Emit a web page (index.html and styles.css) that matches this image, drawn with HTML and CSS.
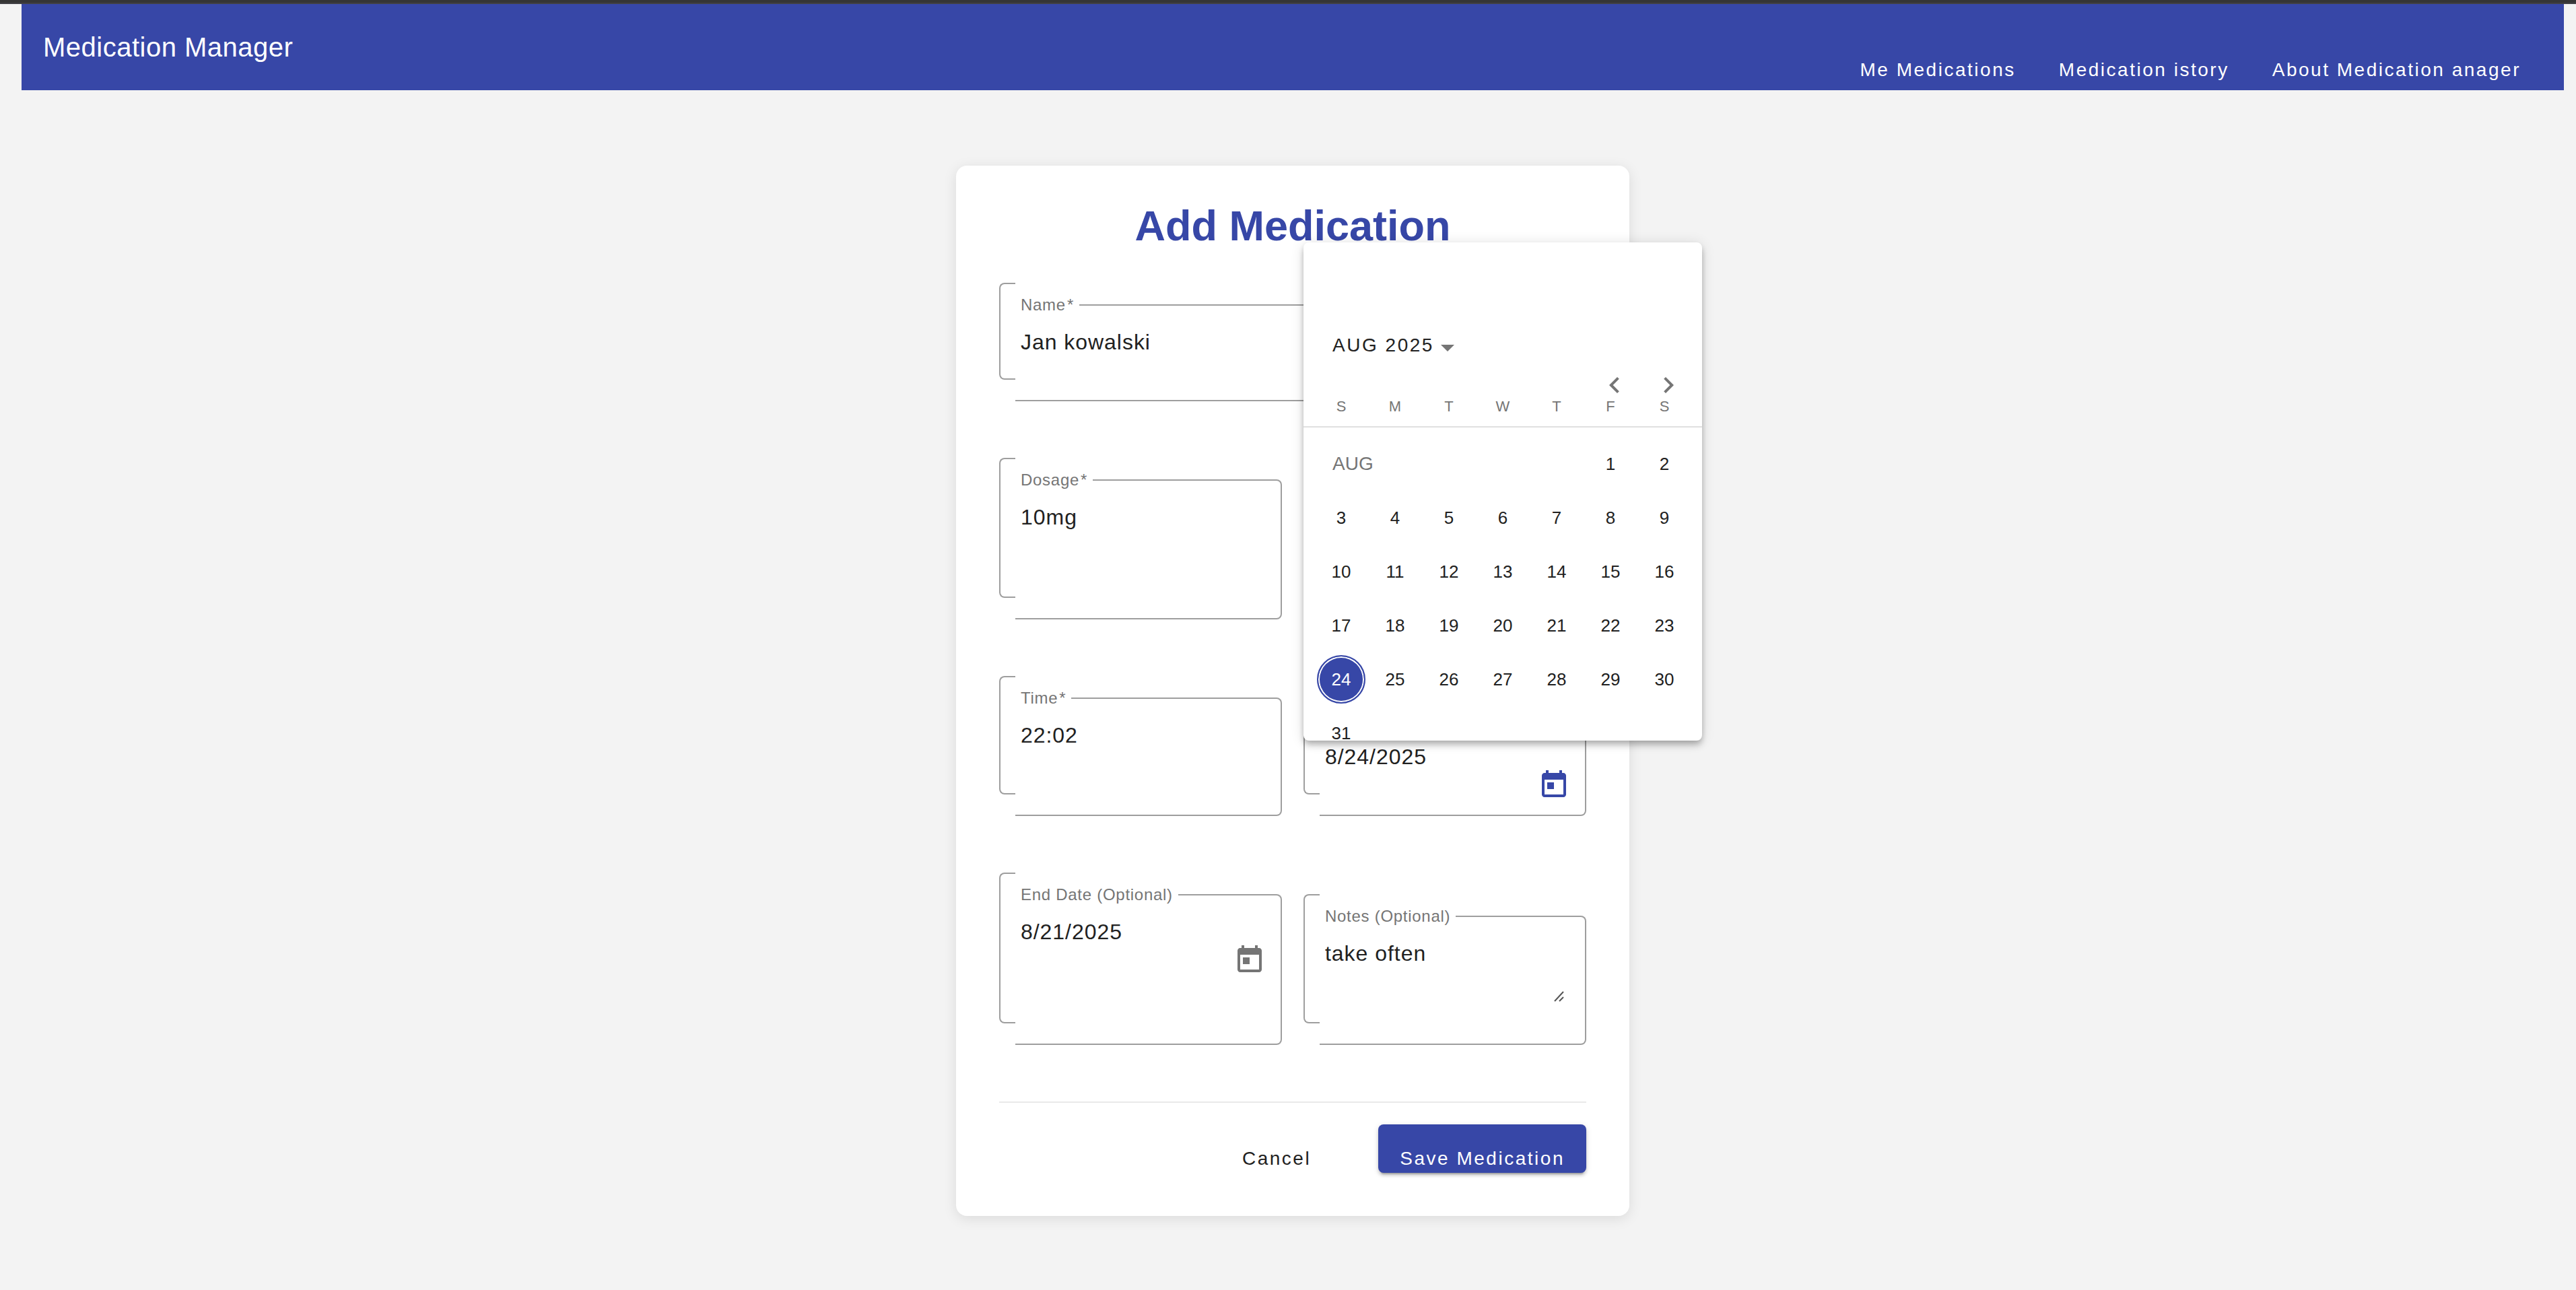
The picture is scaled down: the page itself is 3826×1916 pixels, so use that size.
FILE: index.html
```html
<!DOCTYPE html>
<html lang="en">
<head>
<meta charset="utf-8">
<meta name="viewport" content="width=device-width, initial-scale=1">
<title>Medication Manager</title>
<link rel="stylesheet" href="styles.css">
</head>
<body>
<div class="page">
  <header class="toolbar">
    <span class="toolbar-title">Medication Manager</span>
    <nav class="toolbar-nav">
      <a class="nav-link" href="#medications">Me Medications</a>
      <a class="nav-link" href="#history">Medication istory</a>
      <a class="nav-link" href="#about">About Medication anager</a>
    </nav>
  </header>

  <main class="card">
    <h1 class="card-title">Add Medication</h1>
    <form class="form">
      <div class="field field-wide">
        <div class="outline">
          <span class="outline-start"></span>
          <span class="outline-notch"><label class="field-label" for="name">Name<span class="required">*</span></label></span>
          <span class="outline-end"></span>
        </div>
        <div class="field-body"><input class="field-input" id="name" type="text" value="Jan kowalski"></div>
      </div>

      <div class="field field-tall">
        <div class="outline">
          <span class="outline-start"></span>
          <span class="outline-notch"><label class="field-label" for="dosage">Dosage<span class="required">*</span></label></span>
          <span class="outline-end"></span>
        </div>
        <div class="field-body"><input class="field-input" id="dosage" type="text" value="10mg"></div>
      </div>

      <div class="field field-medium">
        <div class="outline">
          <span class="outline-start"></span>
          <span class="outline-notch"><label class="field-label" for="time">Time<span class="required">*</span></label></span>
          <span class="outline-end"></span>
        </div>
        <div class="field-body"><input class="field-input" id="time" type="text" value="22:02"></div>
      </div>

      <div class="field field-lowered">
        <div class="outline">
          <span class="outline-start"></span>
          <span class="outline-notch"></span>
          <span class="outline-end"></span>
        </div>
        <div class="field-body">
          <input class="field-input" id="start" type="text" aria-label="Start date" value="8/24/2025">
          <button class="date-toggle date-toggle-active" type="button" aria-label="Open calendar">
            <svg class="icon" viewBox="0 0 24 24"><path d="M19 3h-1V1h-2v2H8V1H6v2H5c-1.11 0-1.99.9-1.99 2L3 19c0 1.1.89 2 2 2h14c1.1 0 2-.9 2-2V5c0-1.1-.9-2-2-2zm0 16H5V8h14v11zM7 10h5v5H7z"/></svg>
          </button>
        </div>

        <div class="calendar">
          <div class="calendar-period">
            <button class="period-button" type="button">AUG 2025<svg class="caret" viewBox="0 0 20 10"><path d="M0 0h20L10 10z"/></svg></button>
          </div>
          <div class="calendar-nav">
            <button class="month-button" type="button" aria-label="Previous month"><svg class="icon" viewBox="0 0 24 24"><path d="M15.41 7.41L14 6l-6 6 6 6 1.41-1.41L10.83 12z"/></svg></button>
            <button class="month-button" type="button" aria-label="Next month"><svg class="icon" viewBox="0 0 24 24"><path d="M10 6L8.59 7.41 13.17 12l-4.58 4.59L10 18l6-6z"/></svg></button>
          </div>
          <table class="month">
            <thead>
              <tr><th>S</th><th>M</th><th>T</th><th>W</th><th>T</th><th>F</th><th>S</th></tr>
              <tr><td class="month-divider" colspan="7"></td></tr>
            </thead>
            <tbody>
              <tr><td class="month-name" colspan="5">AUG</td><td><button class="day" type="button">1</button></td><td><button class="day" type="button">2</button></td></tr>
              <tr><td><button class="day" type="button">3</button></td><td><button class="day" type="button">4</button></td><td><button class="day" type="button">5</button></td><td><button class="day" type="button">6</button></td><td><button class="day" type="button">7</button></td><td><button class="day" type="button">8</button></td><td><button class="day" type="button">9</button></td></tr>
              <tr><td><button class="day" type="button">10</button></td><td><button class="day" type="button">11</button></td><td><button class="day" type="button">12</button></td><td><button class="day" type="button">13</button></td><td><button class="day" type="button">14</button></td><td><button class="day" type="button">15</button></td><td><button class="day" type="button">16</button></td></tr>
              <tr><td><button class="day" type="button">17</button></td><td><button class="day" type="button">18</button></td><td><button class="day" type="button">19</button></td><td><button class="day" type="button">20</button></td><td><button class="day" type="button">21</button></td><td><button class="day" type="button">22</button></td><td><button class="day" type="button">23</button></td></tr>
              <tr><td><button class="day day-selected" type="button">24</button></td><td><button class="day" type="button">25</button></td><td><button class="day" type="button">26</button></td><td><button class="day" type="button">27</button></td><td><button class="day" type="button">28</button></td><td><button class="day" type="button">29</button></td><td><button class="day" type="button">30</button></td></tr>
              <tr><td><button class="day" type="button">31</button></td><td colspan="6"></td></tr>
            </tbody>
          </table>
        </div>
      </div>

      <div class="field">
        <div class="outline">
          <span class="outline-start"></span>
          <span class="outline-notch"><label class="field-label" for="end">End Date (Optional)</label></span>
          <span class="outline-end"></span>
        </div>
        <div class="field-body">
          <input class="field-input" id="end" type="text" value="8/21/2025">
          <button class="date-toggle" type="button" aria-label="Open calendar">
            <svg class="icon" viewBox="0 0 24 24"><path d="M19 3h-1V1h-2v2H8V1H6v2H5c-1.11 0-1.99.9-1.99 2L3 19c0 1.1.89 2 2 2h14c1.1 0 2-.9 2-2V5c0-1.1-.9-2-2-2zm0 16H5V8h14v11zM7 10h5v5H7z"/></svg>
          </button>
        </div>
      </div>

      <div class="field field-lowered">
        <div class="outline">
          <span class="outline-start"></span>
          <span class="outline-notch"><label class="field-label" for="notes">Notes (Optional)</label></span>
          <span class="outline-end"></span>
        </div>
        <div class="field-body notes-body">
          <textarea class="field-input field-textarea" id="notes">take often</textarea>
          <svg class="grip" viewBox="0 0 16 16"><path d="M1 15L14 1M8 15l6-6"/></svg>
        </div>
      </div>

      <div class="actions">
        <button class="button" type="button">Cancel</button>
        <button class="button button-primary" type="submit">Save Medication</button>
      </div>
    </form>
  </main>
</div>
</body>
</html>
```
FILE: styles.css
```css
:root {
  --primary: #3747a7;
  --text: #212121;
  --muted: #757575;
  --line: #9e9e9e;
}

* {
  box-sizing: border-box;
}

body {
  margin: 0;
  background: #f3f3f3;
  color: var(--text);
  font-family: "Liberation Sans", Arial, sans-serif;
  border-top: 4px solid #353535;
}

button,
input,
textarea {
  margin: 0;
  padding: 0;
  border: 0;
  background: none;
  color: inherit;
  font-family: inherit;
}

svg {
  display: block;
  fill: currentColor;
}

.page {
  border-top: 2px solid #414044;
  padding: 0 18px 64px 32px;
}

/* Toolbar */
.toolbar {
  display: flex;
  align-items: center;
  justify-content: space-between;
  min-height: 128px;
  padding: 0 32px;
  background: var(--primary);
  color: #fff;
}

.toolbar-title {
  font-size: 40px;
  line-height: 64px;
  letter-spacing: 0.0125em;
}

.toolbar-nav {
  display: flex;
  align-self: flex-end;
  padding-bottom: 10px;
}

.nav-link {
  padding: 0 32px;
  color: inherit;
  font-size: 28px;
  line-height: 40px;
  letter-spacing: 0.09em;
  text-decoration: none;
}

/* Card */
.card {
  max-width: 1000px;
  margin: 112px auto 0;
  padding: 48px 64px 64px;
  border-radius: 16px;
  background: #fff;
  box-shadow: 0 4px 20px rgba(0, 0, 0, 0.1);
}

.card-title {
  margin: 0 0 44px;
  color: var(--primary);
  font-size: 63px;
  line-height: 82px;
  text-align: center;
}

.form {
  display: grid;
  grid-template-columns: repeat(2, minmax(0, 1fr));
  gap: 116px 32px;
}

/* Outlined field: the start cap sits above the notch and end cap */
.field {
  display: grid;
  grid-template-columns: minmax(0, 1fr);
  position: relative;
  min-height: 144px;
}

.field > .outline,
.field > .field-body {
  grid-area: 1 / 1;
}

.field-wide {
  grid-column: 1 / -1;
}

.field-tall {
  grid-column: 1;
  min-height: 208px;
}

.field-medium {
  grid-column: 1;
  min-height: 176px;
}

.field-lowered {
  margin-top: 32px;
}

.outline {
  display: flex;
}

.outline-start {
  width: 24px;
  border: 2px solid var(--line);
  border-right: 0;
  border-radius: 8px 0 0 8px;
}

.outline-notch,
.outline-end {
  margin: 32px 0 -32px;
  border-bottom: 2px solid var(--line);
}

.outline-notch {
  padding: 0 8px;
}

.outline-end {
  flex: 1;
  border-top: 2px solid var(--line);
  border-right: 2px solid var(--line);
  border-radius: 0 8px 8px 0;
}

.field-label {
  display: block;
  margin-top: -12px;
  color: var(--muted);
  font-size: 24px;
  line-height: 26px;
  letter-spacing: 0.03em;
}

.required {
  margin-left: 2px;
}

.field-body {
  display: flex;
  align-items: flex-start;
  padding: 64px 24px 0 32px;
}

.field-input {
  flex: 1;
  width: 100%;
  min-width: 0;
  height: 48px;
  font-size: 32px;
  line-height: 48px;
  letter-spacing: 0.03em;
  outline: 0;
}

.date-toggle {
  height: 80px;
  padding-top: 42px;
  color: var(--muted);
}

.date-toggle-active {
  color: var(--primary);
}

.date-toggle .icon {
  margin-bottom: -10px;
}

.icon {
  width: 48px;
  height: 48px;
}

.notes-body {
  padding-right: 32px;
  padding-bottom: 32px;
}

.field-textarea {
  height: 96px;
  resize: none;
  overflow: hidden;
}

.grip {
  align-self: flex-end;
  width: 16px;
  height: 16px;
  margin-left: -16px;
  fill: none;
  stroke: #555;
  stroke-width: 2;
}

/* Calendar popup */
.calendar {
  position: absolute;
  z-index: 1;
  bottom: 80px;
  left: 0;
  width: 592px;
  height: 740px;
  padding-top: 118px;
  border-radius: 8px;
  background: #fff;
  box-shadow: 0 4px 8px -2px rgba(0, 0, 0, 0.2), 0 8px 10px rgba(0, 0, 0, 0.14), 0 2px 20px rgba(0, 0, 0, 0.12);
}

.calendar-period {
  padding-left: 43px;
}

.period-button {
  display: flex;
  align-items: center;
  gap: 10px;
  font-size: 28px;
  line-height: 70px;
  letter-spacing: 0.09em;
}

.caret {
  width: 20px;
  height: 10px;
  margin-top: 8px;
  fill: var(--muted);
}

.calendar-nav {
  display: flex;
  justify-content: flex-end;
  padding-right: 10px;
  color: var(--muted);
}

.month-button {
  display: flex;
  justify-content: center;
  width: 80px;
}

.month {
  width: 100%;
  padding: 0 16px;
  border-spacing: 0;
  table-layout: fixed;
}

.month th {
  height: 37px;
  padding: 0;
  color: var(--muted);
  font-size: 22px;
  font-weight: 400;
  line-height: 16px;
  vertical-align: top;
}

.month td {
  height: 80px;
  padding: 0;
}

.month .month-divider {
  position: relative;
  height: 16px;
}

.month-divider::after {
  position: absolute;
  top: 0;
  right: -16px;
  left: -16px;
  height: 2px;
  background: #e0e0e0;
  content: "";
}

.month .month-name {
  padding-left: 27px;
  color: var(--muted);
  font-size: 28px;
}

.day {
  display: block;
  width: 72px;
  height: 72px;
  margin: 0 auto;
  border-radius: 50%;
  font-size: 26px;
}

.day-selected {
  border: 2px solid var(--primary);
  background: var(--primary);
  box-shadow: inset 0 0 0 2px #fff;
  color: #fff;
}

/* Form actions */
.actions {
  display: flex;
  grid-column: 1 / -1;
  justify-content: flex-end;
  gap: 68px;
  padding-top: 32px;
  border-top: 2px solid #e9e9e9;
}

.button {
  height: 72px;
  padding: 30px 32px 0;
  border-radius: 8px;
  font-size: 28px;
  line-height: 42px;
  letter-spacing: 0.09em;
}

.button-primary {
  background: var(--primary);
  box-shadow: 0 6px 2px -4px rgba(0, 0, 0, 0.2), 0 4px 4px rgba(0, 0, 0, 0.14), 0 2px 10px rgba(0, 0, 0, 0.12);
  color: #fff;
}
```
